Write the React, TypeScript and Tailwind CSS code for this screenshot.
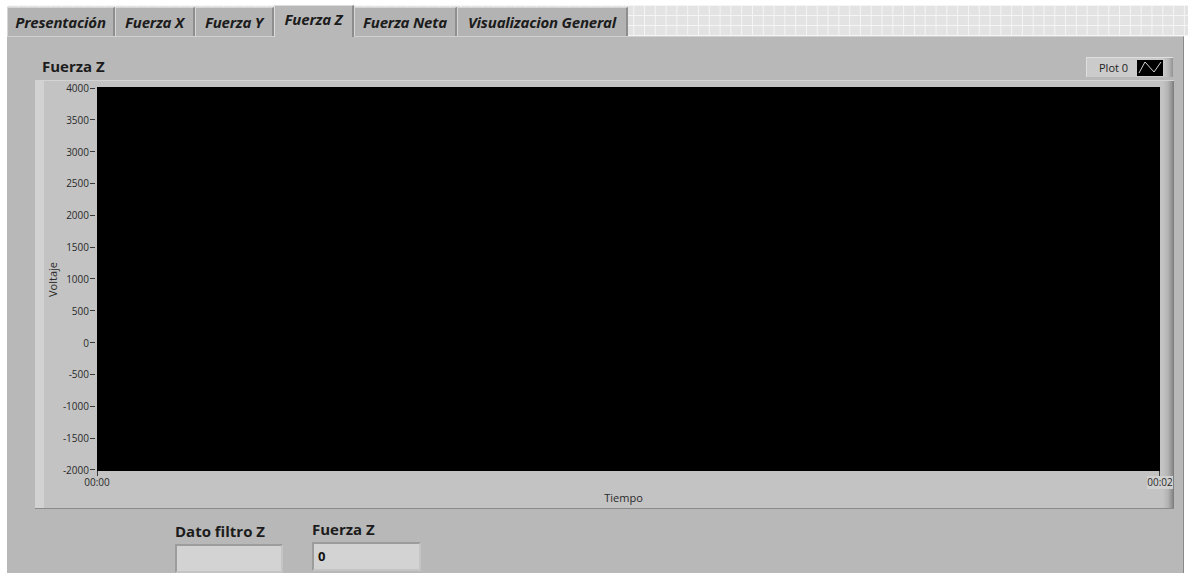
import { Fragment } from 'react';

type Tab = { label: string; width: string; active?: boolean };

const tabs: Tab[] = [
  { label: 'Presentación', width: 'w-[108px]' },
  { label: 'Fuerza X', width: 'w-[80px]' },
  { label: 'Fuerza Y', width: 'w-[79px]' },
  { label: 'Fuerza Z', width: 'w-[80px]', active: true },
  { label: 'Fuerza Neta', width: 'w-[103px]' },
  { label: 'Visualizacion General', width: 'w-[171px]' },
];

const yTicks = ['4000', '3500', '3000', '2500', '2000', '1500', '1000', '500', '0', '-500', '-1000', '-1500', '-2000'];

function TabButton({ tab }: { tab: Tab }) {
  if (tab.active) {
    return (
      <div
        className={`${tab.width} relative z-10 -mb-px flex h-[32px] shrink-0 items-start justify-center border-l border-t border-l-[#dcdcdc] border-t-[#dcdcdc] border-r-2 border-r-[#8c8c8c] bg-[#b8b8b8] pt-[2px] text-[15px] font-bold italic tracking-[-0.2px]`}
      >
        {tab.label}
      </div>
    );
  }
  return (
    <div
      className={`${tab.width} flex h-[29px] shrink-0 items-center justify-center border-l border-t border-l-[#d6d6d6] border-t-[#d6d6d6] border-r-2 border-r-[#8e8e8e] bg-[#b3b3b3] pt-[1px] text-[15px] font-bold italic tracking-[-0.2px]`}
    >
      {tab.label}
    </div>
  );
}

function Legend() {
  return (
    <div className="flex h-[20px] w-[87px] items-center border-l border-t border-l-[#dedede] border-t-[#dedede] bg-[linear-gradient(90deg,#cbcbcb_0,#cbcbcb_76px,#b4b4b4_82px,#8c8c8c_87px)] pl-[12px]">
      <span className="text-[11px] leading-none text-[#222]">Plot 0</span>
      <svg width="26" height="16" viewBox="0 0 26 16" className="ml-[9px] bg-black">
        <polyline points="2,13 8,2 17,12 24,2" fill="none" stroke="#d4d4d4" strokeWidth="1" />
      </svg>
    </div>
  );
}

function Graph() {
  return (
    <div className="flex h-[429px] w-[1139px] border-t border-b border-t-[#d4d4d4] border-b-[#8a8a8a] bg-[#c3c3c3]">
      {/* y scale */}
      <div className="flex w-[62px] shrink-0 bg-[linear-gradient(90deg,#d2d2d2_0,#d2d2d2_9px,#c3c3c3_9px)] pb-[38px] pt-[7px]">
        <div className="ml-[9px] flex w-[16px] items-center justify-center">
          <span className="-rotate-90 whitespace-nowrap text-[11px] leading-none text-[#2a2a2a]">Voltaje</span>
        </div>
        <div className="-my-[6px] flex flex-1 flex-col items-end justify-between">
          {yTicks.map((t) => (
            <div key={t} className="flex h-[12px] items-center">
              <span className="text-[10px] leading-none text-[#2a2a2a]">{t}</span>
              <span className="ml-[1px] mr-[2px] h-px w-[5px] bg-[#3a3a3a]" />
            </div>
          ))}
        </div>
      </div>

      {/* plot + x scale */}
      <div className="flex flex-1 flex-col pt-[6px]">
        <div className="h-[384px] bg-black" />
        <div className="flex h-[5px] justify-between">
          <span className="w-px bg-[#3a3a3a]" />
          <span className="w-px bg-[#3a3a3a]" />
        </div>
        <div className="relative z-10 -mx-[13px] flex justify-between">
          <span className="w-[26px] text-center text-[10px] leading-[13px] text-[#2a2a2a]">00:00</span>
          <span className="w-[26px] bg-[#d0d0d0] text-center text-[10px] leading-[13px] text-[#2a2a2a]">00:02</span>
        </div>
        <div className="pr-[10px] pt-[3px] text-center text-[11px] leading-none text-[#2a2a2a]">Tiempo</div>
      </div>

      {/* right bevel */}
      <div className="w-[14px] shrink-0 bg-[linear-gradient(90deg,#c3c3c3_0,#c3c3c3_3px,#b3b3b3_8px,#909090_12px,#7a7a7a_14px)]" />
    </div>
  );
}

function NumericField({ label, value, className }: { label: string; value?: string; className: string }) {
  return (
    <div className={`flex flex-col ${className}`}>
      <span className="text-[15px] font-bold leading-[19px] text-[#1c1c1c]">{label}</span>
      <div className="mt-[3px] flex h-[29px] items-center border-2 border-t-[#9c9c9c] border-l-[#9c9c9c] border-b-[#c4c4c4] border-r-[#c4c4c4] bg-[#d3d3d3] px-[4px] text-[13px] font-bold text-[#111]">
        {value}
      </div>
    </div>
  );
}

export default function App() {
  return (
    <div className="flex h-[573px] w-[1188px] flex-col overflow-hidden bg-white font-['Open_Sans',sans-serif] text-[#1c1c1c]">
      {/* tab strip, sitting on the front panel grid */}
      <div className="shrink-0 pl-[7px] pt-[5px]">
        <div className="flex h-[31px] items-end bg-[#e3e3e3] bg-[linear-gradient(#f5f5f5_1px,transparent_1px),linear-gradient(90deg,#f5f5f5_1px,transparent_1px)] bg-[size:10.8px_10px]">
          {tabs.map((tab) => (
            <Fragment key={tab.label}>
              <TabButton tab={tab} />
            </Fragment>
          ))}
        </div>
      </div>

      {/* tab page */}
      <div className="ml-[7px] mr-[4px] flex flex-1 flex-col border-r border-t border-r-[#8a8a8a] border-t-[#d0d0d0] bg-[#b8b8b8] pl-[28px] pt-[19px]">
        <div className="flex h-[24px] w-[1139px] items-start justify-between">
          <span className="pl-[7px] pt-px text-[15px] font-bold leading-[19px]">Fuerza Z</span>
          <div className="mr-px pt-px">
            <Legend />
          </div>
        </div>
        <Graph />
        <div className="flex items-start pl-[140px]">
          <NumericField label="Dato filtro Z" className="mt-[13px] w-[108px]" />
          <NumericField label="Fuerza Z" value="0" className="ml-[29px] mt-[11px] w-[109px]" />
        </div>
      </div>
    </div>
  );
}
